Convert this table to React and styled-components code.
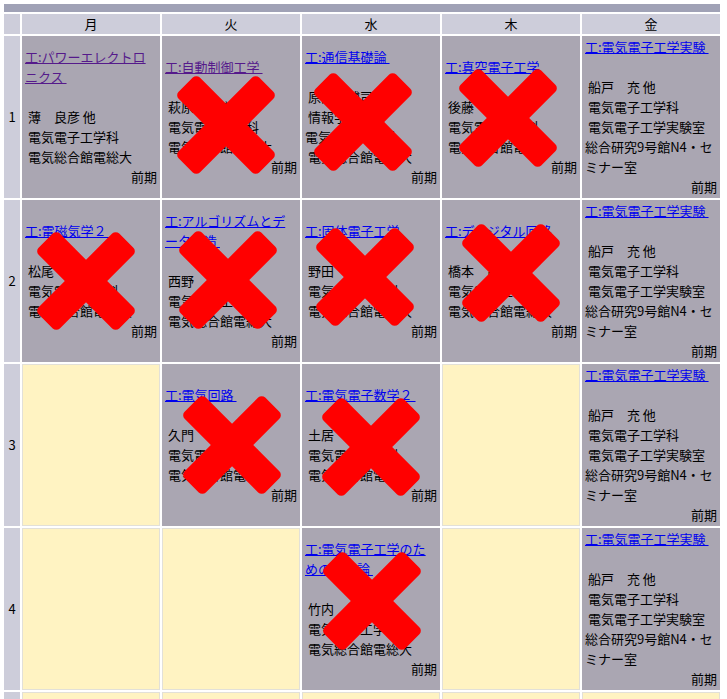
import React from "react";
import styled, { createGlobalStyle } from "styled-components";

const GlobalStyle = createGlobalStyle`
  html, body {
    margin: 0;
    padding: 0;
    background: #ffffff;
  }
  body {
    font-family: "Noto Sans CJK JP", "Noto Sans", sans-serif;
    font-size: 13px;
    color: #000000;
  }
`;

const Table = styled.table`
  width: 720px;
  margin: 2px;
  border-collapse: separate;
  border-spacing: 2px;
  table-layout: fixed;
  font-size: 13px;
  line-height: 20px;
`;

const Col = styled.col`
  width: ${(p) => (p.$narrow ? "16px" : "138px")};
`;

const TopBar = styled.td`
  height: 8px;
  padding: 0;
  background: #a0a2b6;
`;

const Head = styled.th`
  height: 20px;
  padding: 0;
  font-weight: normal;
  text-align: center;
  background: #cdcdda;
`;

const Period = styled.td`
  padding: 0;
  text-align: center;
  background: #cdcdda;
`;

const Cell = styled.td`
  position: relative;
  box-sizing: border-box;
  padding: 0 2px;
  vertical-align: middle;
  background: ${(p) => (p.$empty ? "#fff3c2" : "#aaa6b2")};
  border: 1px solid ${(p) => (p.$empty ? "#e2e0d8" : "#aaa6b2")};
  height: 162px;
  word-break: break-all;
`;

const Course = styled.a`
  color: ${(p) => (p.$visited ? "#551a8b" : "#0000ee")};
  text-decoration: underline;
`;

const Term = styled.div`
  text-align: right;
`;

const Cross = styled.svg`
  position: absolute;
  left: 50%;
  top: 50%;
  width: 104px;
  height: 104px;
  margin-left: ${(p) => p.$dx - 52}px;
  margin-top: ${(p) => p.$dy - 52}px;
  pointer-events: none;
`;

const RedX = ({ dx, dy }) => (
  <Cross $dx={dx} $dy={dy} viewBox="0 0 104 104">
    <g fill="#ff0000" transform="translate(52 52)">
      <rect x="-57" y="-15" width="114" height="30" rx="5" transform="rotate(45)" />
      <rect x="-57" y="-15" width="114" height="30" rx="5" transform="rotate(-45)" />
    </g>
  </Cross>
);

const dept = "\u00a0電気電子工学科";
const hall = "\u00a0電気総合館電総大";

const lab = {
  title: "工:電気電子工学実験",
  lines: [
    "\u00a0船戸　充 他",
    dept,
    "\u00a0電気電子工学実験室",
    "総合研究9号館N4・セミナー室",
  ],
};

const rows = [
  [
    { title: "工:パワーエレクトロニクス", visited: true, lines: ["\u00a0薄　良彦 他", dept, hall] },
    { title: "工:自動制御工学", visited: true, lines: ["\u00a0萩原　朋道", dept, hall], x: [-5, 8] },
    { title: "工:通信基礎論", lines: ["\u00a0原田　博司", "\u00a0情報学研究科", "電気電子工学科", hall], x: [-8, 5] },
    { title: "工:真空電子工学", lines: ["\u00a0後藤　康仁", dept, hall], x: [-3, 1] },
    lab,
  ],
  [
    { title: "工:電磁気学２", lines: ["\u00a0松尾　哲司", dept, hall], x: [-5, 0] },
    { title: "工:アルゴリズムとデータ構造", lines: ["\u00a0西野　哲朗", dept, hall], x: [-3, -1] },
    { title: "工:固体電子工学", lines: ["\u00a0野田　進", dept, hall], x: [-6, -4] },
    { title: "工:ディジタル回路", lines: ["\u00a0橋本　昌宜", dept, hall], x: [0, -8] },
    lab,
  ],
  [
    null,
    { title: "工:電気回路", lines: ["\u00a0久門　尚史", dept, hall], x: [1, 0] },
    { title: "工:電気電子数学２", lines: ["\u00a0土居　伸二", dept, hall], x: [0, 2] },
    null,
    lab,
  ],
  [
    null,
    null,
    { title: "工:電気電子工学のための確率論", lines: ["\u00a0竹内　繁樹", dept, hall], x: [1, -8] },
    null,
    lab,
  ],
  [null, null, null, null, null],
];

const days = ["月", "火", "水", "木", "金"];

const SlotCell = ({ slot }) => {
  if (!slot) return <Cell $empty />;
  return (
    <Cell>
      <Course href="#" $visited={slot.visited}>
        {slot.title + "\u00a0"}
      </Course>
      <br />
      <br />
      {slot.lines.map((line, i) => (
        <React.Fragment key={i}>
          {line}
          <br />
        </React.Fragment>
      ))}
      <Term>前期</Term>
      {slot.x && <RedX dx={slot.x[0]} dy={slot.x[1]} />}
    </Cell>
  );
};

export default function App() {
  return (
    <>
      <GlobalStyle />
      <Table>
        <colgroup>
          <Col $narrow />
          {days.map((d) => (
            <Col key={d} />
          ))}
        </colgroup>
        <thead>
          <tr>
            <TopBar colSpan={6} />
          </tr>
          <tr>
            <Head />
            {days.map((d) => (
              <Head key={d}>{d}</Head>
            ))}
          </tr>
        </thead>
        <tbody>
          {rows.map((row, i) => (
            <tr key={i}>
              <Period>{i + 1}</Period>
              {row.map((slot, j) => (
                <SlotCell key={j} slot={slot} />
              ))}
            </tr>
          ))}
        </tbody>
      </Table>
    </>
  );
}
